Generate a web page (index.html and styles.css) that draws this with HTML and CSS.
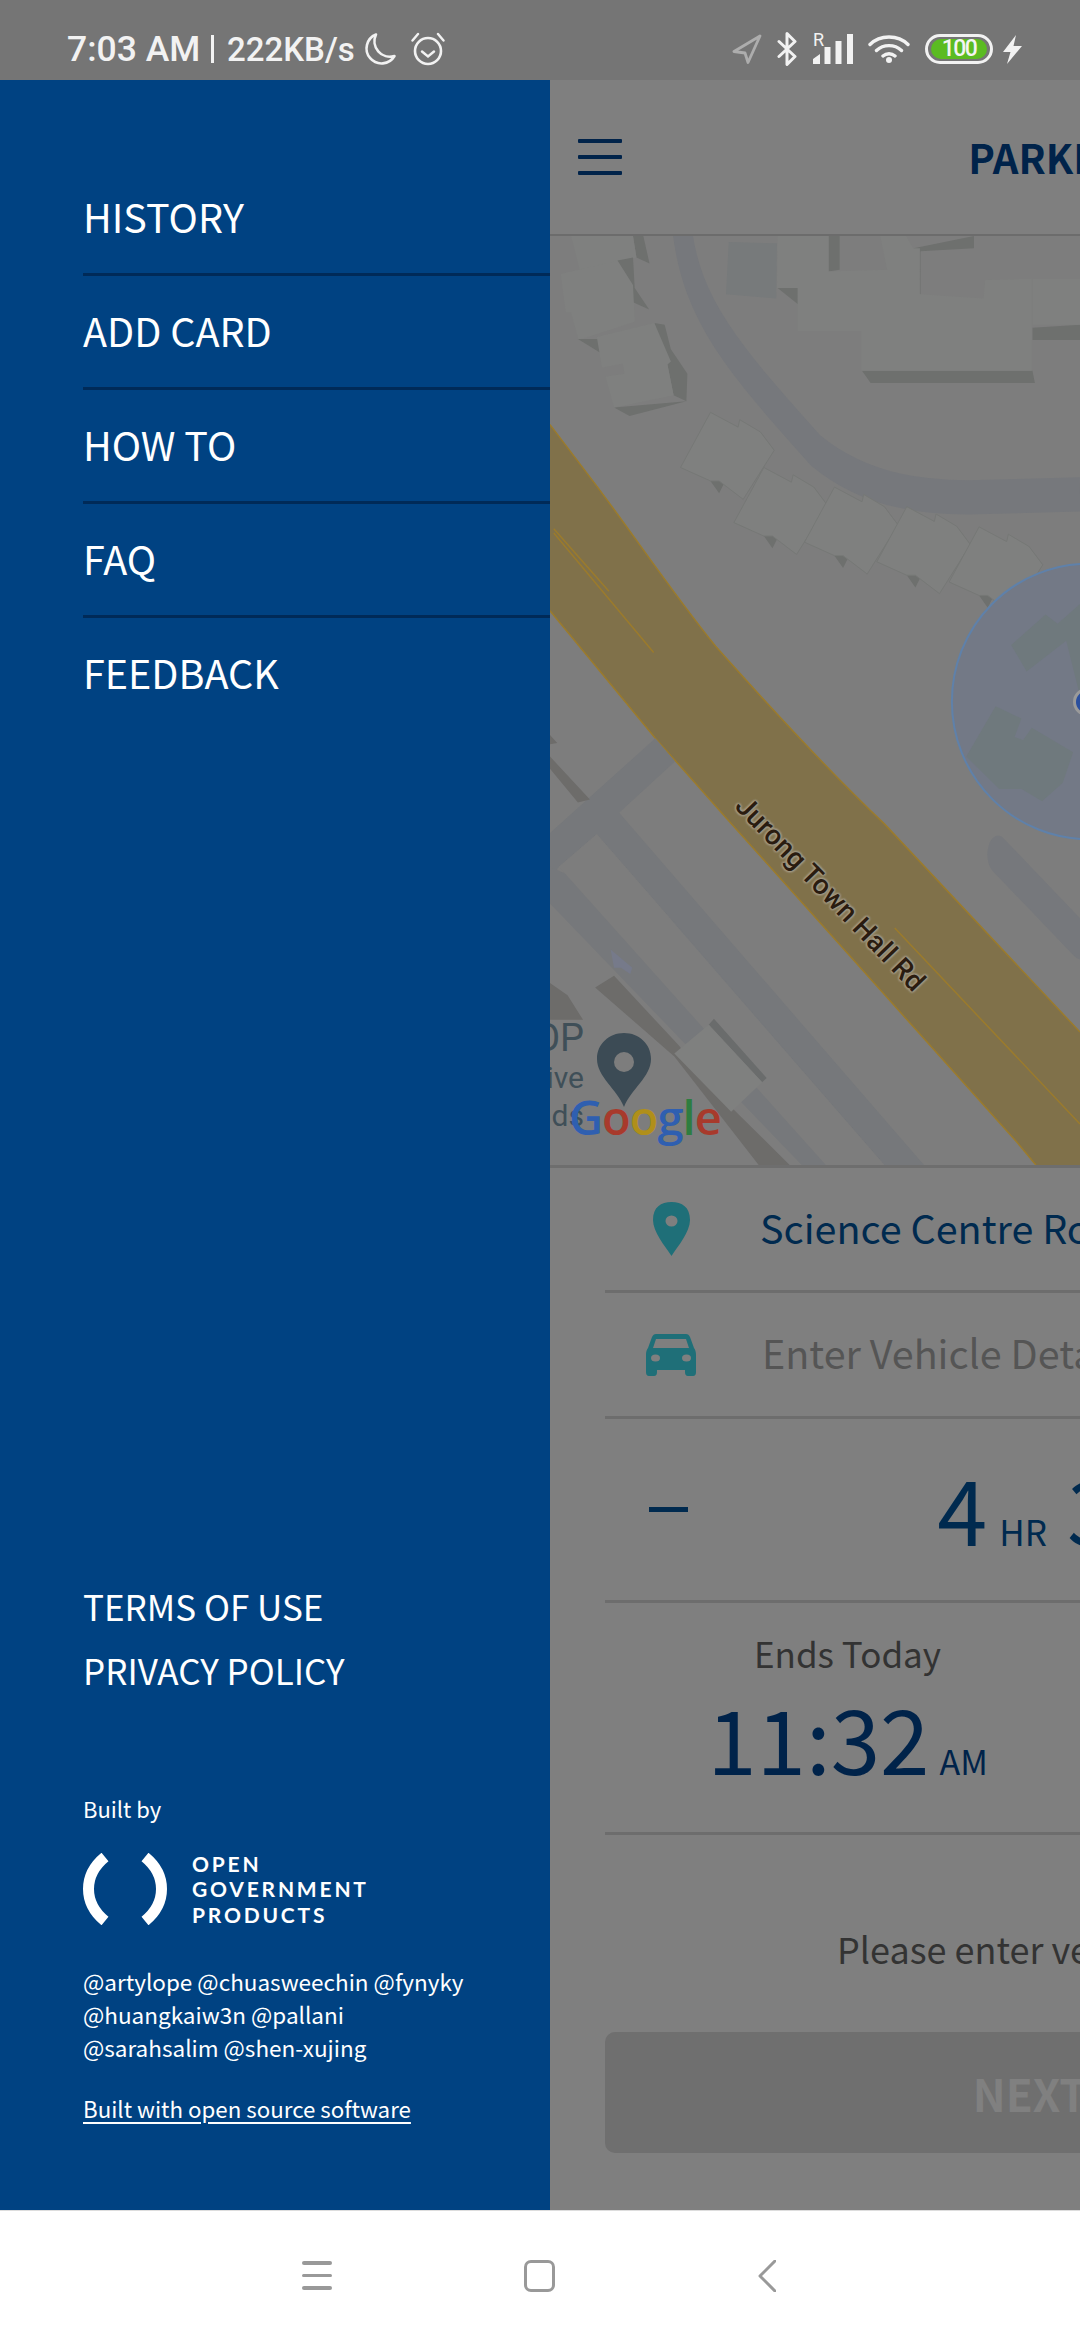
FILE: index.html
```html
<!DOCTYPE html>
<html lang="en">
<head>
<meta charset="utf-8">
<title>Parking</title>
<link rel="stylesheet" href="styles.css">
</head>
<body>
<div class="phone">
  <header class="status">
    <div class="status-left">
      <span class="clock">7:03 AM</span><span class="pipe"></span><span class="speed">222KB/s</span>
      <svg class="st-moon" viewBox="0 0 35 34"><path d="M14 2.500A15 15 0 1 0 32.500 24 A15.500 15.500 0 0 1 14 2.500Z" fill="none" stroke="#f2f2f2" stroke-width="2.600" stroke-linejoin="round"/></svg>
      <svg class="st-alarm" viewBox="0 0 34 34"><circle cx="17" cy="19" r="13" fill="none" stroke="#f2f2f2" stroke-width="2.600"/><path d="M11 19.500l6 5 6-5M1.500 8.500L7 2M32.500 8.500L27 2" fill="none" stroke="#f2f2f2" stroke-width="2.400" stroke-linecap="round"/></svg>
    </div>
    <div class="status-right">
      <svg class="st-loc" viewBox="0 0 30 30"><path d="M28 2L2 17.500l11 1.500 3 9.500Z" fill="none" stroke="#adadad" stroke-width="2.800" stroke-linejoin="round"/></svg>
      <svg class="st-bt" viewBox="0 0 21 34"><path d="M2 9.500l16 15-8 8V1.500l8 8-16 15" fill="none" stroke="#f2f2f2" stroke-width="3" stroke-linejoin="round" stroke-linecap="round"/></svg>
      <div class="st-signal">
        <span class="st-r">R</span>
        <svg class="st-bars" viewBox="0 0 40 30"><path d="M0 30v-5l7-5v10ZM11.500 30V13h6v17ZM22.500 30V7h6v23ZM34 30V0h6v30Z" fill="#f2f2f2"/></svg>
      </div>
      <svg class="st-wifi" viewBox="0 0 42 28"><path d="M2 9.500C12-.5 30-.5 40 9.500M8.500 15.500c7-6.500 18-6.500 25 0M15 21c3.500-3 8.500-3 12 0" fill="none" stroke="#f2f2f2" stroke-width="3.400" stroke-linecap="round"/><circle cx="21" cy="25" r="3" fill="#f2f2f2"/></svg>
      <div class="st-batt"><span class="st-batt-fill">100</span></div>
      <svg class="st-bolt" viewBox="0 0 19 29"><path d="M13 0L0 17h7.500L4 29 19 11h-8.500Z" fill="#f2f2f2"/></svg>
    </div>
  </header>

  <div class="body">
    <aside class="drawer">
      <nav class="menu">
        <a class="menu-item">HISTORY</a>
        <a class="menu-item">ADD CARD</a>
        <a class="menu-item">HOW TO</a>
        <a class="menu-item">FAQ</a>
        <a class="menu-item menu-last">FEEDBACK</a>
      </nav>
      <div class="foot">
        <a class="legal">TERMS OF USE</a>
        <a class="legal">PRIVACY POLICY</a>
        <p class="built">Built by</p>
        <div class="logo">
          <svg class="logo-mark" viewBox="0 0 84 72"><path d="M22 4C0 22 0 50 22 68" fill="none" stroke="#fff" stroke-width="11"/><path d="M62 4C84 22 84 50 62 68" fill="none" stroke="#fff" stroke-width="11"/></svg>
          <div class="logo-text"><span>OPEN</span><span>GOVERNMENT</span><span>PRODUCTS</span></div>
        </div>
        <p class="handles">@artylope @chuasweechin @fynyky<br>@huangkaiw3n @pallani<br>@sarahsalim @shen-xujing</p>
        <a class="oss">Built with open source software</a>
      </div>
    </aside>

    <div class="clip">
      <main class="app">
        <div class="topbar">
          <div class="burger"><span></span><span></span><span></span></div>
          <div class="title">PARKING.SG</div>
          <div></div>
        </div>

        <div class="map">
          <svg class="map-art" viewBox="29 10 1539 1517" preserveAspectRatio="none">
            <defs>
              <g id="house">
                <path class="bld-sh" d="M495 410l25 0 20-28 16 8-36 40zM640 330l40 30-14 12-40-30z"/>
                <path class="bld bld-edge" d="M495 298l80 24 5-12 60 20 40 30-90 80-70-30-25 0-87-22Z"/>
              </g>
            </defs>
            <!-- curved road top -->
            <path class="road-stroke" d="M413 0C440 130 560 210 800 360C950 430 1130 440 1300 436L1568 432" stroke-width="56"/>
            <!-- top buildings -->
            <path class="bld-sh" d="M270 10h30l18 45-38-10Z"/>
            <path class="bld" d="M90 10h180l10 35-165 20Z"/>
            <path class="bld-sh" d="M225 50l45-5 5 50 42 35-60-15-7-25Z"/>
            <path class="bld" d="M60 72l165-22 45 40 5 60-163 30-22-45-15 0Z"/>
            <path class="bld-sh" d="M110 178l60 0 12 25Z"/>
            <path class="bld-sh" d="M332 152l30 3 18 40 48 40-3 45-37-10-18-50Z"/>
            <path class="bld-sh" d="M215 290l210-10-165 24Z"/>
            <path class="bld" d="M165 175l167-23 48 63-10 5 18 50-173 20-25-50 55-5-5-17-60 7Z"/>
            <path class="bld-dim" d="M548 20l140 2-2 90-146-7Z"/>
            <path class="bld-sh" d="M838 10h32v55l-32 3ZM1085 30l175-20v20l-155 5v70h-20ZM935 230h495l7 20h-477ZM1430 160l138-5v25h-138ZM690 95h60v27Z"/>
            <path class="bld" d="M690 10h148v58l170-3-20-55h75l20 20 20 0 0 75 185 7 5-30 135-2v150h-495v-65h-185v-70h-60Z"/>
            <path class="bld" d="M1430 80h138v75h-138Z"/>
            <!-- houses -->
            <use href="#house"/>
            <use href="#house" x="155" y="90"/>
            <use href="#house" x="360" y="122"/>
            <use href="#house" x="570" y="154"/>
            <use href="#house" x="780" y="187"/>
            <!-- yellow road -->
            <path class="road-yel" d="M29 318L140 400C250 480 380 590 510 680C700 800 850 890 1000 970L1568 1310V1527H1440L1385 1490L540 960L335 830L29 622Z"/>
            <path class="road-line" d="M29 318L140 400C250 480 380 590 510 680C700 800 850 890 1000 970L1568 1310M29 622L335 830L540 960L1385 1490L1440 1527M40 488L200 590M40 495L330 690M1030 1140L1568 1460"/>
            <!-- accuracy circle -->
            <ellipse class="acc" cx="1594" cy="770" rx="398" ry="225"/>
            <path class="bld-in" d="M1368 678l100-50 35 15 65-32v150l-40-90-115 50Z"/>
            <path class="bld-in" d="M1238 860l85-82 75 20-20 30 25 5 25-20 120 40-30 50-60 30-60-20-65 0Z"/>
            <path class="road-stroke" d="M1330 1020L1568 1160" stroke-width="62" stroke-linecap="round"/>
            <!-- lower left service roads -->
            <path class="road-grey" d="M29 985L335 830L392 868L230 952L1115 1527H1000L165 987L55 1040L29 1060Z"/>
            <path class="road-grey" d="M29 1100L760 1527H1000L390 1130L29 1040Z"/>
            <path class="lot" d="M55 1040L165 987L1000 1527H830Z"/>
            <path class="strip" d="M215 1218L400 1330L560 1435L725 1527H635L390 1350L160 1237Z"/>
            <path class="strip-d" d="M505 1288L658 1385L645 1392L490 1298Z"/>
            <path class="lot-l" d="M390 1345L490 1298L645 1392L555 1440Z"/>
            <path class="arrow" d="M205 1175L268 1205L262 1215L235 1205L215 1205Z"/>
            <path class="strip" d="M29 860L145 930L110 935L29 880ZM29 1230L80 1250L125 1290L29 1290ZM29 825L50 838L29 840Z"/>
          </svg>
          <span class="me"></span>
          <span class="road-name">Jurong Town Hall Rd</span>
          <span class="poi poi-a">DOP</span>
          <span class="poi poi-b">Drive</span>
          <span class="poi poi-c">Lands</span>
          <svg class="map-pin" viewBox="0 0 54 74"><path d="M27 0C12 0 0 11 0 26C0 44 20 56 27 74C34 56 54 44 54 26C54 11 42 0 27 0Z" fill="#3c4b55"/><circle cx="27" cy="29" r="10" fill="#7d7d7d"/></svg>
          <span class="google"><b class="g-b">G</b><b class="g-r">o</b><b class="g-y">o</b><b class="g-b">g</b><b class="g-g">l</b><b class="g-r">e</b></span>
        </div>

        <section class="form">
          <div class="row row-loc">
            <div class="row-icon"><svg class="pin" viewBox="0 0 37 54"><path d="M18.500 0C8 0 0 5 0 18C0 30 12 44 18.500 54C25 44 37 30 37 18C37 5 29 0 18.500 0Z" fill="#1f6f78"/><ellipse cx="18.500" cy="19" rx="6" ry="5.500" fill="#7f7f7f"/></svg></div>
            <span class="loc-text">Science Centre Road</span>
          </div>
          <div class="row row-car">
            <div class="row-icon"><svg class="car" viewBox="0 0 50 42"><path d="M10 0H40C42 0 43 1 44 3L48 14C49.500 16 50 18 50 21V38C50 40.500 49 42 47 42H42C40 42 39 40.500 39 38V36H11V38C11 40.500 10 42 8 42H3C1 42 0 40.500 0 38V21C0 18 .5 16 2 14L6 3C7 1 8 0 10 0Z" fill="#1f6f78"/><path d="M10 5H40L43 14H7Z" fill="#7f7f7f"/><ellipse cx="9.500" cy="24" rx="4.500" ry="3.500" fill="#7f7f7f"/><ellipse cx="40.500" cy="24" rx="4.500" ry="3.500" fill="#7f7f7f"/></svg></div>
            <span class="car-text">Enter Vehicle Details</span>
          </div>
          <div class="row row-dur">
            <span class="minus"></span>
            <div class="dur"><span class="big">4</span><span class="unit">HR</span><span class="big big-2">30</span><span class="unit">MIN</span></div>
            <span></span>
          </div>
          <div class="row row-time">
            <div class="time-col">
              <span class="ends">Ends Today</span>
              <span class="time"><span class="time-big">11:32</span><span class="unit unit-am">AM</span></span>
            </div>
          </div>
          <p class="hint">Please enter vehicle details</p>
          <div class="next"><span>NEXT STEP</span></div>
        </section>
      </main>
    </div>
  </div>

  <footer class="navbar">
    <div class="nav-menu"><span></span><span></span><span></span></div>
    <span class="nav-home"></span>
    <svg class="nav-back" viewBox="0 0 18 32"><path d="M17 1L2 16l15 15" fill="none" stroke="#999" stroke-width="3" stroke-linecap="round" stroke-linejoin="round"/></svg>
  </footer>
</div>
</body>
</html>
```
FILE: styles.css
```css
* { box-sizing: border-box; }
html, body { margin: 0; padding: 0; }
body { width: 1080px; height: 2340px; overflow: hidden; background: #fff; font-family: "Noto Sans CJK SC", "Noto Sans", sans-serif; }
p { margin: 0; }

.phone { width: 1080px; height: 2340px; display: flex; flex-direction: column; }

/* status bar */
.status { height: 80px; flex: none; background: #757575; display: flex; justify-content: space-between; align-items: center; padding: 18px 58px 0 67px; color: #f2f2f2; font-family: Roboto, sans-serif; font-size: 34px; font-weight: 500; }
.status-left { display: flex; align-items: center; }
.clock { width: 133px; white-space: nowrap; font-size: 35.500px; }
.pipe { width: 3px; height: 28px; background: #f2f2f2; margin: 0 13px 0 11px; }
.speed { width: 128px; white-space: nowrap; font-size: 33px; letter-spacing: 0; }
.st-moon { width: 35px; height: 34px; margin-left: 7px; }
.st-alarm { width: 34px; height: 34px; margin-left: 14px; }
.status-right { display: flex; align-items: center; gap: 15px; }
.st-loc { width: 30px; height: 30px; }
.st-bt { width: 21px; height: 34px; }
.st-signal { width: 40px; height: 30px; position: relative; }
.st-bars { width: 40px; height: 30px; display: block; }
.st-r { position: absolute; left: 0; top: -3px; font-size: 18px; line-height: 18px; font-weight: 400; }
.st-wifi { width: 42px; height: 28px; }
.st-batt { width: 68px; height: 30px; border: 3px solid #f2f2f2; border-radius: 15px; padding: 2px 3px; display: flex; }
.st-batt-fill { flex: 1; background: #5bbb22; border-radius: 10px; font-size: 23px; line-height: 20px; font-weight: 500; letter-spacing: -1.500px; text-align: center; color: #f4f4f4; }
.st-bolt { width: 19px; height: 29px; margin-left: -5px; }

/* layout */
.body { flex: 1; min-height: 0; display: flex; }

/* drawer */
.drawer { width: 550px; flex: none; background: #004282; color: #fff; display: flex; flex-direction: column; justify-content: space-between; padding: 82px 0 85px 83px; }
.menu { display: flex; flex-direction: column; }
.menu-item { height: 114px; padding-top: 27px; font-size: 39.500px; line-height: 54px; border-bottom: 3px solid #002a58; }
.menu-last { border-bottom: 0; }
.foot { display: flex; flex-direction: column; align-items: flex-start; }
.legal { font-size: 35px; line-height: 64.500px; }
.built { font-size: 22px; line-height: 32px; margin-top: 89px; }
.logo { display: flex; align-items: center; margin-top: 27px; }
.logo-mark { width: 84px; height: 72px; }
.logo-text { display: flex; flex-direction: column; margin-left: 25px; font-family: Lato, sans-serif; font-weight: 700; font-size: 21px; line-height: 25.500px; letter-spacing: 2.800px; }
.handles { font-size: 22.500px; line-height: 33px; margin-top: 38px; }
.oss { font-size: 22.300px; line-height: 33px; margin-top: 28px; text-decoration: underline; text-underline-offset: 4px; }

/* dimmed app behind the drawer */
.clip { flex: 1; min-width: 0; overflow: hidden; background: #7f7f7f; }
.app { width: 1080px; height: 100%; display: flex; flex-direction: column; }
.topbar { height: 156px; flex: none; border-bottom: 2px solid #6c6c6c; display: grid; grid-template-columns: 1fr auto 1fr; align-items: center; }
.burger { display: flex; flex-direction: column; gap: 12px; margin-left: 28px; width: 44px; }
.burger span { height: 4px; background: #00234a; border-radius: 1px; }
.title { font-size: 40px; line-height: 50px; font-weight: 700; color: #00234a; }

/* map */
.map { height: 932px; flex: none; position: relative; overflow: hidden; background: #7d7d7d; border-bottom: 3px solid #6e6e6e; }
.map-art { position: absolute; left: 0; top: 0; width: 530px; height: 929px; }
.bld { fill: #7f807f; }
.bld-edge { stroke: #767876; stroke-width: 1px; vector-effect: non-scaling-stroke; }
.bld-dim { fill: #777a7b; }
.bld-sh { fill: #6e706e; }
.bld-in { fill: #6f797d; }
.road-stroke { fill: none; stroke: #76787c; }
.road-grey { fill: #76787b; }
.road-yel { fill: #80714a; }
.road-line { fill: none; stroke: #9b7b2c; stroke-width: 1.500px; vector-effect: non-scaling-stroke; }
.acc { fill: #737986; stroke: #5f81aa; stroke-width: 2px; vector-effect: non-scaling-stroke; }
.lot { fill: #7d7d7d; }
.lot-l { fill: #7f807f; }
.strip { fill: #6d6c6a; }
.strip-d { fill: #6a6c6c; }
.arrow { fill: #767a8a; }
.me { position: absolute; left: 523px; top: 452px; width: 28px; height: 28px; border-radius: 50%; background: #2a4f9e; border: 3px solid #9a9a9a; }
.road-name { position: absolute; left: 150px; top: 640px; width: 260px; text-align: center; transform: rotate(46deg); font-family: Roboto, sans-serif; font-size: 28px; font-weight: 500; line-height: 36px; color: #2a1c10; white-space: nowrap; text-shadow: 0 0 3px #a59d8a, 0 0 3px #a59d8a, 0 0 3px #a59d8a, 0 0 3px #a59d8a, 0 0 2px #a59d8a; }
.poi { position: absolute; left: -90px; width: 124px; text-align: right; color: #3f4f58; font-family: Roboto, sans-serif; white-space: nowrap; }
.poi-a { top: 780px; font-size: 38px; line-height: 44px; }
.poi-b { top: 822px; font-size: 30px; line-height: 40px; }
.poi-c { top: 860px; font-size: 30px; line-height: 40px; }
.map-pin { position: absolute; left: 47px; top: 797px; width: 54px; height: 74px; }
.google { position: absolute; left: 19px; top: 851px; font-family: "Open Sans", sans-serif; font-size: 47px; line-height: 60px; letter-spacing: -1px; }
.google b { font-weight: 600; }
.g-b { color: #2f5fb0; }
.g-r { color: #a83a2c; }
.g-y { color: #b08f1a; }
.g-g { color: #2e7d40; }

/* form */
.form { flex: 1; min-height: 0; display: flex; flex-direction: column; padding: 0 55px; }
.row { display: flex; align-items: center; border-bottom: 3px solid #6d6d6d; }
.row-loc { height: 125px; }
.row-car { height: 126px; }
.row-icon { width: 132px; flex: none; display: flex; justify-content: center; }
.pin { width: 37px; height: 54px; display: block; }
.car { width: 50px; height: 42px; display: block; }
.loc-text { margin: 0 0 4px 23px; font-size: 39.500px; line-height: 56px; color: #002a4f; white-space: nowrap; }
.car-text { margin: 0 0 6px 25px; font-size: 39.500px; line-height: 56px; color: #555; white-space: nowrap; }
.row-dur { height: 184px; display: grid; grid-template-columns: 1fr auto 1fr; align-items: center; padding-bottom: 6px; }
.minus { width: 39px; height: 5px; margin-left: 44px; margin-top: 6px; background: #002a4f; }
.dur { display: flex; align-items: baseline; color: #002a4f; }
.big { font-size: 90px; line-height: 110px; font-weight: 400; }
.big-2 { margin-left: 20px; }
.unit { font-size: 35px; line-height: 44px; margin-left: 12px; }
.row-time { height: 232px; align-items: flex-start; }
.time-col { width: 485px; display: flex; flex-direction: column; align-items: center; padding-top: 26px; }
.ends { font-size: 35px; line-height: 48px; color: #333; }
.time { display: flex; align-items: baseline; color: #00234a; line-height: 90px; margin-top: 15px; }
.time-big { font-size: 89px; line-height: 90px; font-weight: 400; }
.unit-am { margin-left: 10px; font-size: 34px; }
.hint { margin: 89px 0 0 232px; font-size: 36px; line-height: 48px; color: #333; white-space: nowrap; }
.next { height: 121px; margin-top: 60px; border-radius: 10px; background: #6f6f6f; display: flex; align-items: center; justify-content: center; font-size: 44px; font-weight: 700; color: #808080; }

/* nav bar */
.navbar { height: 130px; flex: none; background: #fff; border-top: 1px solid #ddd; display: flex; align-items: center; padding-left: 302px; }
.nav-menu { width: 30px; display: flex; flex-direction: column; gap: 9px; }
.nav-menu span { height: 3.500px; background: #999; border-radius: 2px; }
.nav-home { width: 31px; height: 32px; margin-left: 192px; border: 3px solid #999; border-radius: 7px; }
.nav-back { width: 18px; height: 32px; margin-left: 203px; }
```
